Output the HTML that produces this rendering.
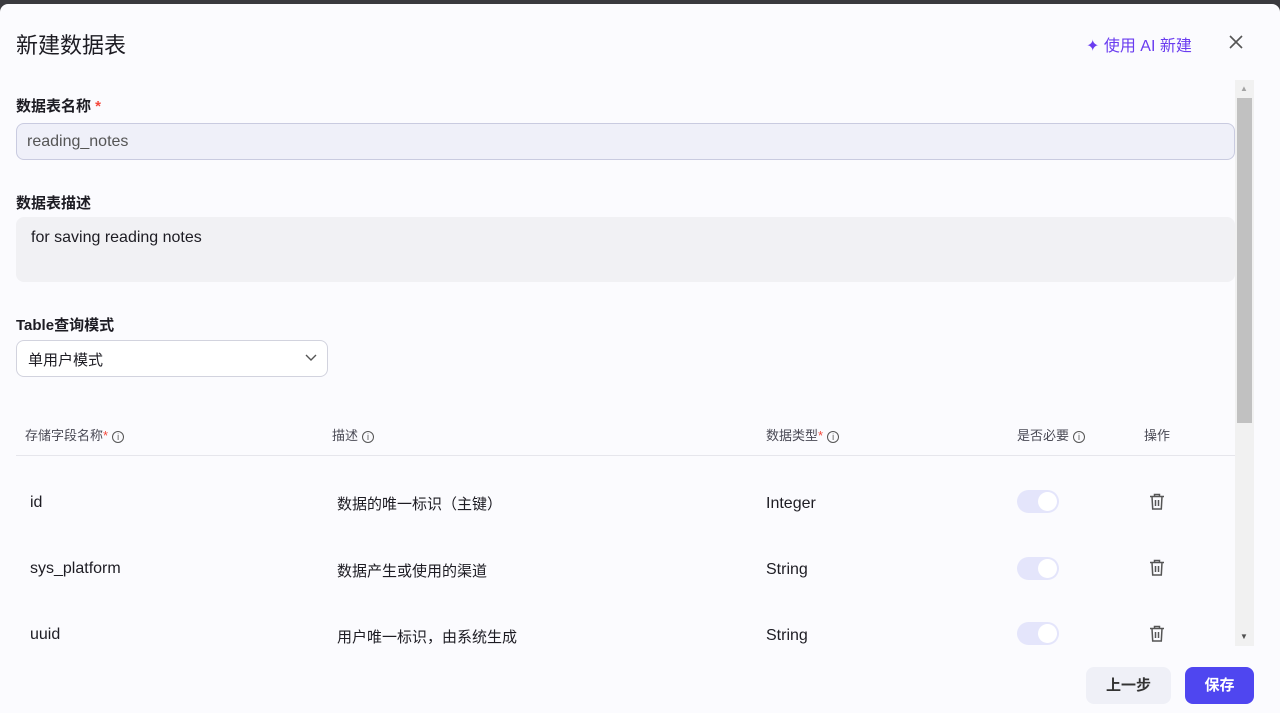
<!DOCTYPE html><html><head><meta charset="utf-8"><style>
*{box-sizing:border-box;margin:0;padding:0}
body{width:1280px;height:713px;background:#3a3a3e;font-family:"Liberation Sans","Noto Sans CJK SC",sans-serif;overflow:hidden;position:relative}
.m{position:absolute;left:0;top:4px;width:1280px;height:709px;background:#fbfbfe;border-radius:8px 8px 0 0}
.a{position:absolute;white-space:nowrap}
.lbl{font-size:15px;font-weight:bold;color:#1d1c23}
.th{font-size:13px;color:#4a4a55}
.cell{font-size:16px;color:#1d1c23}
.ds{font-size:15px;color:#1d1c23}
.tg{position:absolute;width:42px;height:23px;border-radius:12px;background:#e4e5fb;left:1017px}
.tg::after{content:"";position:absolute;right:2px;top:2px;width:19px;height:19px;border-radius:50%;background:#fff}
.i{display:inline-block;width:12px;height:12px;border:1px solid #555;border-radius:50%;font-size:9px;text-align:center;line-height:10px;margin-left:4px;vertical-align:0px;color:#555}
</style></head><body>
<div class="m"></div>
<div class="a" style="left:16px;top:28px;font-size:22px;color:#1d1c23">新建数据表</div>
<div class="a" style="left:1086px;top:32px;font-size:16px;color:#6a3cf0">✦ 使用 AI 新建</div>
<svg class="a" style="left:1228px;top:34px" width="16" height="16"><path d="M2 2L14 14M14 2L2 14" stroke="#555" stroke-width="1.6"/></svg>
<div class="a lbl" style="left:16px;top:95px">数据表名称 <span style="color:#f5483b">*</span></div>
<div class="a" style="left:16px;top:123px;width:1219px;height:37px;border:1px solid #c9cbe0;border-radius:8px;background:#eff0f9;font-size:16px;color:#555;padding:9px 10px">reading_notes</div>
<div class="a lbl" style="left:16px;top:192px">数据表描述</div>
<div class="a" style="left:16px;top:217px;width:1219px;height:65px;border-radius:8px;background:#f1f1f4;font-size:16px;color:#1d1c23;padding:12px 15px">for saving reading notes</div>
<div class="a lbl" style="left:16px;top:314px">Table查询模式</div>
<div class="a" style="left:16px;top:340px;width:312px;height:37px;border:1px solid #d2d3de;border-radius:8px;background:#fff;font-size:15px;color:#1d1c23;padding:8px 11px">单用户模式
<svg style="position:absolute;right:10px;top:13px" width="12" height="8"><path d="M1 1L6 6L11 1" stroke="#555" fill="none" stroke-width="1.4"/></svg></div>
<div class="a th" style="left:25px;top:425px">存储字段名称<span style="color:#f5483b">*</span><span class="i">i</span></div>
<div class="a th" style="left:332px;top:425px">描述<span class="i">i</span></div>
<div class="a th" style="left:766px;top:425px">数据类型<span style="color:#f5483b">*</span><span class="i">i</span></div>
<div class="a th" style="left:1017px;top:425px">是否必要<span class="i">i</span></div>
<div class="a th" style="left:1144px;top:425px">操作</div>
<div class="a" style="left:16px;top:455px;width:1219px;height:1px;background:#e6e6ec"></div>
<div class="a cell" style="left:30px;top:494px">id</div>
<div class="a ds" style="left:337px;top:493px">数据的唯一标识（主键）</div>
<div class="a cell" style="left:766px;top:495px">Integer</div>
<div class="tg" style="top:490px"></div>
<div class="a cell" style="left:30px;top:560px">sys_platform</div>
<div class="a ds" style="left:337px;top:560px">数据产生或使用的渠道</div>
<div class="a cell" style="left:766px;top:561px">String</div>
<div class="tg" style="top:557px"></div>
<div class="a cell" style="left:30px;top:626px">uuid</div>
<div class="a ds" style="left:337px;top:626px">用户唯一标识，由系统生成</div>
<div class="a cell" style="left:766px;top:627px">String</div>
<div class="tg" style="top:622px"></div>
<svg class="a" style="left:1149px;top:493px" width="16" height="18"><path d="M1 3.5H15M5.5 3.5V1.5H10.5V3.5M3 3.5L3.7 16H12.3L13 3.5M6.5 7V13M9.5 7V13" stroke="#555" fill="none" stroke-width="1.5"/></svg>
<svg class="a" style="left:1149px;top:559px" width="16" height="18"><path d="M1 3.5H15M5.5 3.5V1.5H10.5V3.5M3 3.5L3.7 16H12.3L13 3.5M6.5 7V13M9.5 7V13" stroke="#555" fill="none" stroke-width="1.5"/></svg>
<svg class="a" style="left:1149px;top:625px" width="16" height="18"><path d="M1 3.5H15M5.5 3.5V1.5H10.5V3.5M3 3.5L3.7 16H12.3L13 3.5M6.5 7V13M9.5 7V13" stroke="#555" fill="none" stroke-width="1.5"/></svg>
<div class="a" style="left:1235px;top:80px;width:19px;height:566px;background:#f1f1f1"></div>
<div class="a" style="left:1237px;top:98px;width:15px;height:325px;background:#c1c1c1"></div>
<div class="a" style="left:1240px;top:84px;font-size:8px;color:#a3a3a3">▲</div>
<div class="a" style="left:1240px;top:632px;font-size:8px;color:#505050">▼</div>
<div class="a" style="left:1086px;top:667px;width:85px;height:37px;border-radius:8px;background:#eff0f7;font-size:15px;font-weight:bold;color:#333;text-align:center;line-height:37px">上一步</div>
<div class="a" style="left:1185px;top:667px;width:69px;height:37px;border-radius:8px;background:#4f46f0;font-size:15px;font-weight:bold;color:#fff;text-align:center;line-height:37px">保存</div>
</body></html>
